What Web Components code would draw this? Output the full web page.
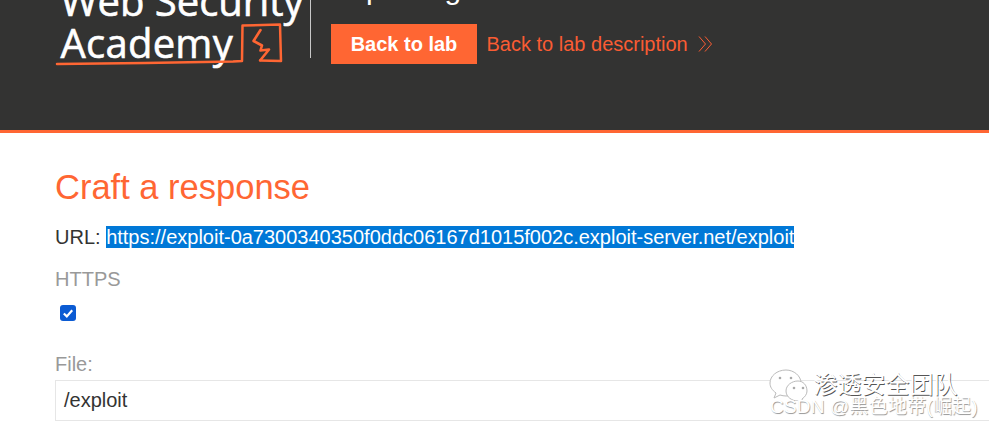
<!DOCTYPE html>
<html><head><meta charset="utf-8"><style>
html,body{margin:0;padding:0;background:#fff;overflow:hidden;height:427px}
body{font-family:"Liberation Sans",Arial,sans-serif;position:relative}
</style></head><body>
<template id="t-header"><style>
:host{display:flex;box-sizing:border-box;height:133px;background:#333332;border-bottom:3px solid #ff6633;padding-left:55px;overflow:hidden}
.logo{width:255px;height:58px;border-right:1px solid #c8c8c8;box-sizing:content-box;flex:none;position:relative}
.logo span{position:absolute;left:5.500px;font:400 40px/50px "Open Sans",sans-serif;color:#fff;white-space:nowrap;-webkit-text-stroke:.6px #fff}
.logo .w{top:-24px}
.logo .a{top:18px;letter-spacing:.25px}
.logo svg{position:absolute;left:0;top:0}
.main{margin-left:20px;display:flex;flex-direction:column;position:relative}
.title{height:30px;margin-top:-26px;font-size:30px;line-height:30px;color:#fff;white-space:nowrap}
.row{display:flex;align-items:center;margin-top:20px}
.btn{background:#ff6633;color:#fff;font-weight:700;font-size:20px;height:40px;line-height:40px;width:146px;text-align:center}
.lnk{margin-left:9.500px;font-size:20px;color:#fa5c33;white-space:nowrap}
.row svg{margin-left:10.500px}
</style>
<div class="logo"><span class="w">Web Security</span><span class="a">Academy</span>
<svg width="256" height="70" fill="none" stroke="#ff6633" stroke-linejoin="round" stroke-linecap="round">
<path d="M2 64C60 63.500 120 62.500 178 61.500L187 61 187.500 25.500 225 24.500 226 61 205 60.500" stroke-width="2.500"/>
<path d="M205.500 30L198.500 41 207 45.500 205.500 50.500 214 49.500 205.500 60" stroke-width="2.600"/>
</svg></div>
<div class="main"><div class="title">Exploiting</div>
<div class="row"><div class="btn">Back to lab</div><div class="lnk">Back to lab description</div>
<svg width="15" height="16" viewBox="0 0 15 16" fill="none" stroke="#fa5c33" stroke-width="1"><path d="M1 .5L7.500 8 1 15.500M7 .5L13.500 8 7 15.500"/></svg></div></div>
</template>
<template id="t-form"><style>
:host{display:block;padding:34px 55px 0;color:#333332}
h1{margin:0;font-weight:400;font-size:34.500px;line-height:40px;color:#ff6633}
.url{margin-top:18px;font-size:20px;line-height:24px;white-space:nowrap}
.url span{background:#0078d7;color:#fff}
.lab{color:#999;font-size:20px;line-height:24px}
.https{margin-top:18px}
.chk{display:block;width:16px;height:16px;margin:14px 0 0 5px;border-radius:3px;background:#0b5bd3}
.file{margin-top:31px}
.inp{margin-top:4px;border:1px solid #e6e6e6;border-right:0;height:39px;box-sizing:content-box;padding-left:8px;line-height:38px;font-size:20px;margin-right:-55px}
</style>
<h1>Craft a response</h1>
<div class="url">URL: <span>https://exploit-0a7300340350f0ddc06167d1015f002c.exploit-server.net/exploit</span></div>
<div class="lab https">HTTPS</div>
<svg class="chk" viewBox="0 0 16 16"><path d="M3.800 8.500L6.800 11.400 12.200 5.200" fill="none" stroke="#fff" stroke-width="2.200"/></svg>
<div class="lab file">File:</div>
<div class="inp">/exploit</div>
</template>
<template id="t-wm"><style>
:host{position:absolute;left:768px;top:369px;width:215px;height:52px;display:block;color:#fff;white-space:nowrap}
.t{position:absolute;left:45.500px;top:-1px;font:24px/29px "Noto Sans CJK SC",sans-serif;text-shadow:.7px .7px .6px #555}
.s{position:absolute;left:2px;top:25px;font:19px/26px "Liberation Sans","Noto Sans CJK SC",sans-serif;letter-spacing:.2px;color:#fff;text-shadow:.7px .7px .7px #999}
svg{position:absolute;left:0;top:0}
</style>
<svg width="46" height="32" fill="#fff" stroke="#bbb" stroke-width="1"><path d="M18 1C9 1 2 7 2 14c0 4 2 7 6 10l-2 5 6-3c2 .6 4 1 6 1 8 0 15-6 15-13S26 1 18 1z"/><path d="M30 12c-6 0-12 4-12 10s6 10 12 10l5 2-1-4c3-2 5-5 5-8 0-6-4-10-9-10z"/><circle cx="12" cy="9" r="1.300" fill="#aaa" stroke="none"/><circle cx="23" cy="9" r="1.300" fill="#aaa" stroke="none"/><circle cx="26" cy="19" r="1.300" fill="#aaa" stroke="none"/><circle cx="35" cy="19" r="1.300" fill="#aaa" stroke="none"/></svg>
<div class="t">渗透安全团队</div><div class="s">CSDN @黑色地带(崛起)</div>
</template>
<lab-header></lab-header><craft-form></craft-form><water-mark></water-mark>
<script>
function def(n,t){customElements.define(n,class extends HTMLElement{constructor(){super();this.attachShadow({mode:"open"}).appendChild(document.getElementById(t).content.cloneNode(true))}})}
def("lab-header","t-header");def("craft-form","t-form");def("water-mark","t-wm");
</script>
</body></html>
